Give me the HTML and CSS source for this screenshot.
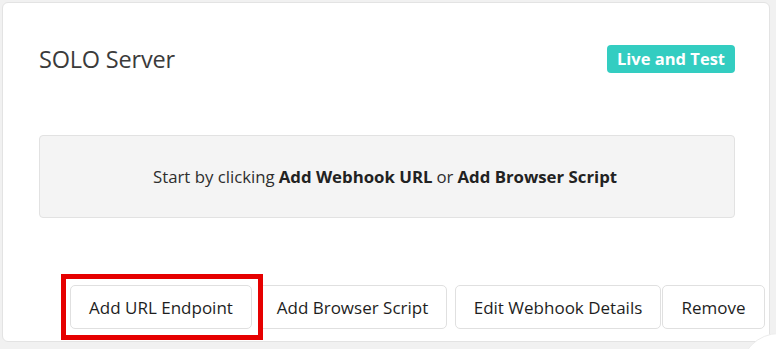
FILE: index.html
```html
<!DOCTYPE html>
<html lang="en">
<head>
    <meta charset="UTF-8">
    <meta name="viewport" content="width=device-width, initial-scale=1.0">
    <title>Webhooks</title>
    <link rel="stylesheet" href="styles.css">
</head>
<body>
    <div class="card">
        <div class="card-header">
            <h2 class="card-title">SOLO Server</h2>
            <span class="badge">Live and Test</span>
        </div>

        <div class="empty-box">
            Start by clicking <strong>Add Webhook URL</strong> or <strong>Add Browser Script</strong>
        </div>

        <div class="actions">
            <button class="btn btn-highlight">Add URL Endpoint</button>
            <button class="btn btn-browser">Add Browser Script</button>
            <button class="btn btn-edit">Edit Webhook Details</button>
            <button class="btn btn-remove">Remove</button>
        </div>
    </div>
    <div class="chat-corner"><div class="chat-bubble"></div></div>
</body>
</html>
```

FILE: styles.css
```css
html, body {
    margin: 0;
    padding: 0;
    height: 349px;
    overflow: hidden;
}
body {
    font-family: 'Open Sans', 'Liberation Sans', sans-serif;
    background-color: #f1f1f1;
    color: #222;
    position: relative;
}
.card {
    margin: 2px 6px 0 2px;
    height: 340px;
    box-sizing: border-box;
    background: #fff;
    border: 1px solid #e3e3e3;
    border-radius: 6px;
    padding: 0 34px 0 36px;
}
.card-header {
    display: flex;
    justify-content: space-between;
    align-items: center;
    padding-top: 41px;
    height: 30px;
}
.card-title {
    margin: 0;
    font-size: 23.5px;
    font-weight: 400;
    color: #3b3b3b;
    letter-spacing: -0.2px;
}
.badge {
    background-color: #33cdc1;
    color: #fff;
    font-weight: 700;
    font-size: 16.5px;
    padding: 3px 10px;
    border-radius: 4px;
    line-height: 22px;
}
.empty-box {
    margin-top: 61px;
    height: 83px;
    box-sizing: border-box;
    background: #f4f4f4;
    border: 1px solid #e2e2e2;
    border-radius: 4px;
    display: flex;
    align-items: center;
    justify-content: center;
    font-size: 16.8px;
    color: #2e2e2e;
}
.empty-box strong {
    margin: 0 4px;
    color: #222;
}
.actions {
    display: flex;
    margin-top: 67px;
    margin-left: 31px;
    margin-right: -30px;
}
.btn {
    font-family: inherit;
    font-size: 17px;
    color: #1e1e1e;
    background: #fff;
    border: 1px solid #e0e0e0;
    border-radius: 5px;
    height: 44px;
    padding: 0 12px;
    cursor: pointer;
    flex-shrink: 0;
}
.btn-highlight {
    position: relative;
    width: 182px;
}
/* annotation box around the first button */
.btn-highlight::after {
    content: "";
    position: absolute;
    top: -12px;
    left: -10px;
    right: -12px;
    bottom: -12px;
    border: 5px solid #e60000;
}
.btn-browser {
    margin-left: 6px;
    width: 189px;
}
.btn-edit {
    margin-left: 8px;
    width: 206px;
}
.btn-remove {
    margin-left: 1px;
    width: 103px;
}
.chat-corner {
    position: absolute;
    right: 0;
    bottom: 0;
    width: 44px;
    height: 16px;
    overflow: hidden;
}
.chat-bubble {
    width: 76px;
    height: 76px;
    margin-left: 8px;
    border-radius: 50%;
    background: #fff;
    border: 1px solid #ececec;
}
```
